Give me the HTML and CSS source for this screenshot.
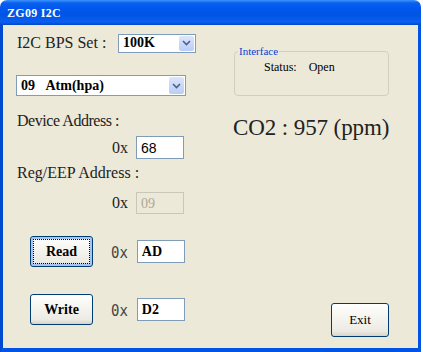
FILE: index.html
```html
<!DOCTYPE html>
<html lang="en">
<head>
  <meta charset="UTF-8">
  <title>ZG09 I2C</title>
  <link rel="stylesheet" href="styles.css">
</head>
<body>

  <div class="window">
    <div class="titlebar">ZG09 I2C</div>
    <div class="frame">
      <div class="client">

        <div class="left">
          <div class="row-bps">
            <span class="label">I2C BPS Set :</span>
            <div class="combo combo-bps">
              <span class="combo-text">100K</span>
              <span class="combo-arrow">
                <svg width="9" height="6" viewBox="0 0 9 6"><path d="M1 1 L4.5 4.5 L8 1" fill="none" stroke="#4d6185" stroke-width="1.6"/></svg>
              </span>
            </div>
          </div>

          <div class="combo combo-mode">
            <span class="combo-text">09&nbsp;&nbsp;&nbsp;Atm(hpa)</span>
            <span class="combo-arrow">
              <svg width="9" height="6" viewBox="0 0 9 6"><path d="M1 1 L4.5 4.5 L8 1" fill="none" stroke="#4d6185" stroke-width="1.6"/></svg>
            </span>
          </div>

          <div class="label label-dev">Device Address :</div>
          <div class="addr-row">
            <span class="hex">0x</span>
            <input class="field" type="text" value="68">
          </div>

          <div class="label label-reg">Reg/EEP Address :</div>
          <div class="addr-row addr-reg">
            <span class="hex">0x</span>
            <input class="field" type="text" value="09" disabled>
          </div>

          <div class="action-row action-read">
            <button class="btn btn-focus">Read</button>
            <span class="hex hex-mono">0x</span>
            <input class="field field-bold" type="text" value="AD">
          </div>

          <div class="action-row action-write">
            <button class="btn">Write</button>
            <span class="hex hex-mono">0x</span>
            <input class="field field-bold" type="text" value="D2">
          </div>
        </div>

        <div class="right">
          <fieldset class="group">
            <legend>Interface</legend>
            <div class="status"><span>Status:</span><span>Open</span></div>
          </fieldset>

          <div class="reading">CO2 : 957 (ppm)</div>

          <button class="btn btn-exit">Exit</button>
        </div>

      </div>
    </div>
  </div>

</body>
</html>
```

FILE: styles.css
```css
body {
  margin: 0;
  padding: 0;
  background: #ffffff;
  font-family: 'Liberation Serif', serif;
}

.window {
  width: 421px;
  height: 352px;
  display: flex;
  flex-direction: column;
}

.titlebar {
  height: 25px;
  box-sizing: border-box;
  padding: 6px 0 0 7px;
  border-radius: 7px 7px 0 0;
  background: linear-gradient(#3d95ff 0, #0a5fef 3px, #0058ee 8px, #0054e3 60%, #0a5ff0 88%, #0047c8 100%);
  color: #ffffff;
  font-weight: bold;
  font-size: 12px;
  letter-spacing: 0.3px;
}

.frame {
  flex: 1;
  display: flex;
  border: 3px solid #0054e3;
  border-top: none;
  border-bottom-width: 4px;
  border-left-color: #0049d1;
}

.client {
  flex: 1;
  display: flex;
  background: #ece9d8;
}

.left {
  width: 200px;
  padding-left: 12px;
  display: flex;
  flex-direction: column;
}

.label {
  font-size: 16px;
  line-height: 18px;
  color: #222222;
}

.row-bps {
  margin-top: 9px;
  display: flex;
  align-items: center;
  height: 18px;
}

.row-bps .label {
  width: 101px;
  padding-left: 2px;
}

.combo {
  display: flex;
  align-items: center;
  background: #ffffff;
  border: 1px solid #7f9db9;
  box-sizing: border-box;
  padding: 1px;
}

.combo-text {
  flex: 1;
  font-weight: bold;
  font-size: 14px;
  padding-left: 3px;
  color: #000000;
}

.combo-arrow {
  width: 15px;
  align-self: stretch;
  display: flex;
  align-items: center;
  justify-content: center;
  border-radius: 2px;
  background: linear-gradient(#dce6fb, #b9cdf7);
}

.combo-bps {
  width: 78px;
  height: 19px;
}

.combo-mode {
  width: 170px;
  height: 21px;
  margin-top: 23px;
  margin-left: 1px;
}

.label-dev {
  margin-top: 16px;
  padding-left: 2px;
  letter-spacing: -0.45px;
}

.addr-row {
  display: flex;
  align-items: center;
  margin-top: 6px;
  padding-left: 97px;
  gap: 8px;
}

.hex {
  font-size: 16px;
  color: #222222;
}

.hex-mono {
  font-family: 'DejaVu Sans Mono', monospace;
  font-size: 14px;
  color: #444444;
  transform: scaleY(1.15);
}

.field {
  width: 48px;
  height: 23px;
  box-sizing: border-box;
  border: 1px solid #7f9db9;
  background: #ffffff;
  padding: 1px 4px 0;
  font-family: 'Liberation Sans', sans-serif;
  font-size: 14px;
  color: #000000;
  margin: 0;
}

.field-bold {
  font-family: 'Liberation Serif', serif;
  font-weight: bold;
  font-size: 14px;
}

.field:disabled {
  background: #ece9d8;
  border-color: #c9c7ba;
  color: #aca899;
  font-family: 'Liberation Serif', serif;
}

.label-reg {
  margin-top: 5px;
  padding-left: 2px;
}

.addr-reg {
  margin-top: 10px;
}

.addr-reg .field {
  height: 22px;
}

.action-row {
  display: flex;
  align-items: center;
  padding-left: 15px;
}

.action-read {
  margin-top: 22px;
}

.action-write {
  margin-top: 27px;
}

.action-row .hex {
  margin-left: 18px;
  margin-right: 9px;
}

.btn {
  width: 63px;
  height: 31px;
  border: 1px solid #003c74;
  border-radius: 3px;
  background: linear-gradient(#ffffff 0, #f6f5f0 40%, #eceae3 85%, #d8d3c6 100%);
  font-family: 'Liberation Serif', serif;
  font-weight: bold;
  font-size: 14px;
  color: #000000;
  padding: 0;
}

.btn-focus {
  box-shadow: inset 0 0 0 2px #a8c3ee;
  outline: 1px dotted #000000;
  outline-offset: -4px;
}

.right {
  width: 156px;
  margin-left: 18px;
  display: flex;
  flex-direction: column;
}

.group {
  margin: 20px 0 0 1px;
  padding: 0;
  height: 51px;
  box-sizing: border-box;
  border: 1px solid #d0d0bf;
  border-radius: 4px;
}

.group legend {
  margin-left: 3px;
  padding: 0 1px;
  font-size: 11px;
  color: #0046d5;
  line-height: 12px;
}

.status {
  display: flex;
  gap: 12px;
  padding: 3px 0 0 29px;
  font-size: 12px;
  color: #000000;
}

.reading {
  margin-top: 19px;
  font-size: 23px;
  line-height: 26px;
  color: #222222;
  letter-spacing: -0.1px;
  white-space: nowrap;
}

.btn-exit {
  width: 58px;
  height: 34px;
  margin: auto 0 11px auto;
  font-weight: normal;
  font-size: 13px;
}
```
